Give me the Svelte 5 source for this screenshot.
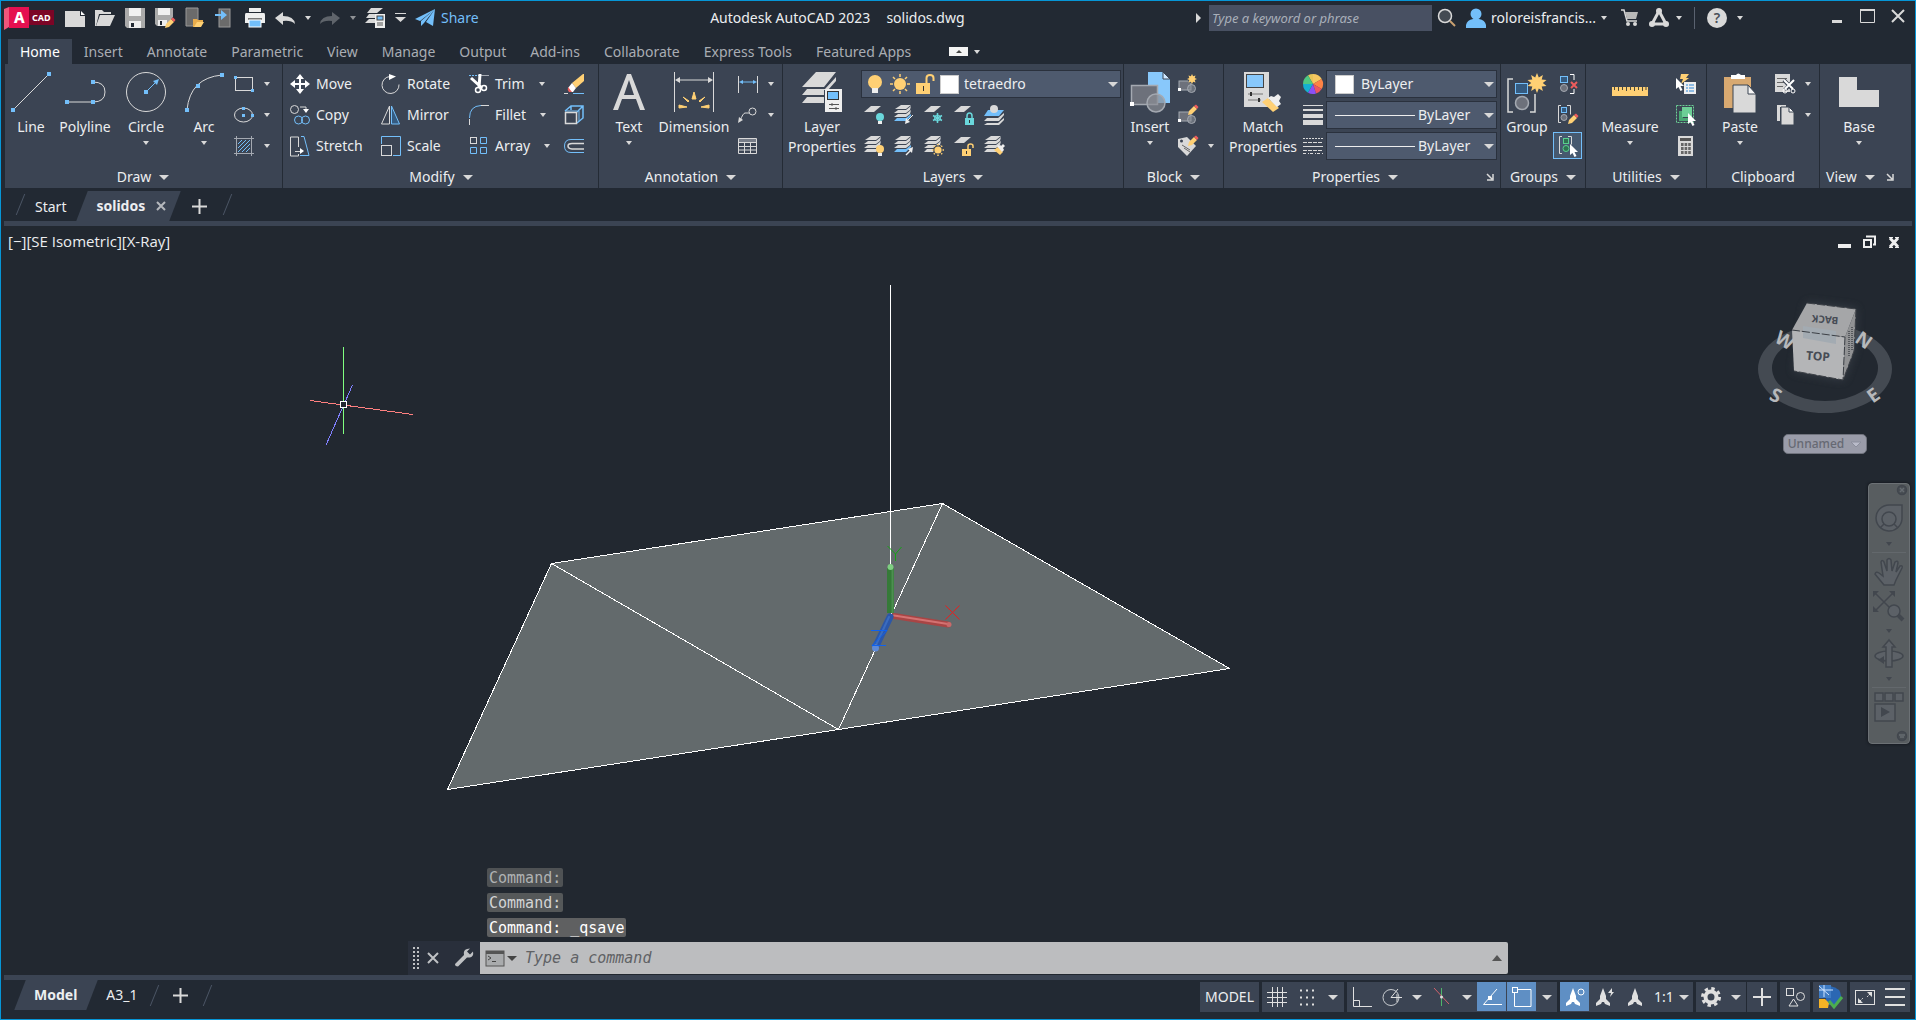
<script>
  const L = '#d9d9d9';
  const B = '#73bffa';
  const Y = '#ffd074';
  const G = '#a4a9b1';
  const D = '#3b4453';

  const dot = (x, y, s = 3) => `<rect x="${x}" y="${y}" width="${s}" height="${s}" fill="${B}"/>`;
  const sheet = (x, y, c = L) => `<path d="M${x + 7} ${y}h10l-7 6H${x}z" fill="${c}"/>`;
  const sheets = (second = L, third = L) =>
    `<path d="M7 0h10l-5 4H1zM4 5h8l5-4-1 4-4 3H0z" fill="${L}"/><path d="M4 9h8l5-4-1 4-4 3H0z" fill="${second}"/><path d="M3 13h9l5-4v2l-5 5H0z" fill="${third}"/>`;
  const bulb = (x, y, c) =>
    `<circle cx="${x}" cy="${y}" r="4" fill="${c}"/><rect x="${x - 2}" y="${y + 4}" width="4" height="3" fill="#eee"/>`;
  const rays = (x, y, r, c = Y) => {
    let d = '';
    for (let i = 0; i < 8; i++) {
      const a = (i * Math.PI) / 4;
      const [s, k] = [Math.sin(a), Math.cos(a)];
      d += `M${(x + r * 0.75 * s).toFixed(1)} ${(y - r * 0.75 * k).toFixed(1)}L${(x + r * s).toFixed(1)} ${(y - r * k).toFixed(1)}`;
    }
    return `<circle cx="${x}" cy="${y}" r="${r * 0.6}" fill="${c}"/><path d="${d}" stroke="${c}" stroke-width="1.500"/>`;
  };
  const star = (x, y, r, n = 10) => {
    let pts = '';
    for (let i = 0; i < n * 2; i++) {
      const rad = i % 2 ? r * 0.58 : r;
      const a = (i * Math.PI) / n;
      pts += `${(x + rad * Math.sin(a)).toFixed(1)},${(y - rad * Math.cos(a)).toFixed(1)} `;
    }
    return `<polygon points="${pts}" fill="${Y}"/>`;
  };
  const pencil = (x, y) =>
    `<path d="M${x} ${y + 10}l1-4 5-5 3 3-5 5z" fill="${Y}"/><path d="M${x + 6} ${y + 1}l2-1.5 2.500 2.500-1.500 2z" fill="#ee5c5c"/>`;
  const pointer = (x, y) => `<path d="M${x} ${y}v11l2.500-2 2 4 2-1-2-4h3.500z" fill="#fff"/>`;
  const padlock = (x, y, c, open) =>
    `<rect x="${x}" y="${y + 5}" width="9" height="7" fill="${c}"/><path d="M${open ? `${x + 6} ${y + 5}v-3q0-2 2.500-2t2.500 2v2` : `${x + 2} ${y + 5}v-2q0-3 2.500-3t2.500 3v2`}" fill="none" stroke="${c}" stroke-width="1.500"/><rect x="${x + 4}" y="${y + 7}" width="1" height="3" fill="#333"/>`;
  const brush = (x, y) =>
    `<path d="M${x + 1} ${y + 5}l4-3 5 5-3 3z" fill="${Y}"/><path d="M${x + 4} ${y + 1}l2-1 2 1 2-2 2 2-2 2 1 2-2 2z" fill="#eee"/>`;
  const blockShape = `<rect x="1" y="7" width="12" height="9" fill="#6d717b" stroke="${G}"/><circle cx="13.500" cy="14.500" r="4" fill="#8b8f96" fill-opacity=".6" stroke="${G}"/><rect x="0" y="14" width="3" height="3" fill="#fff"/>`;
  const compass = `<path d="M10 1l3 8v3l4 4v3l-5-2-1-2h-2l-1 2-5 2v-3l4-4v-3z" fill="currentColor"/>`;

  const icons = {
    newFile: `<path d="M0 3h15v5h5v11H0z" fill="${L}"/><path d="M16 3l4 4h-4z" fill="#fff"/>`,
    open: `<path d="M0 2h7l2 2h7v2H4L1 18H0z" fill="${L}"/><path d="M5 7h15l-5 11H1z" fill="${L}"/>`,
    save: `<path d="M0 0h20v20H2l-2-2z" fill="#aaa"/><rect x="4" width="12" height="8" fill="#f0f0f0"/><rect x="4" y="13" width="12" height="7" fill="#eee"/><rect x="6" y="15" width="3" height="4" fill="#222933"/>`,
    saveAs: `<path d="M0 0h18v9l-7 9H2l-2-2z" fill="#aaa"/><rect x="3" width="12" height="7" fill="#f0f0f0"/><rect x="3" y="12" width="9" height="6" fill="#eee"/><rect x="5" y="13" width="2" height="4" fill="#222933"/>${pencil(10, 10)}`,
    mobileOpen: `<path d="M1 0h12v18H1z" fill="#6b6b6b" stroke="#999"/><path d="M8 19v-8h4l1 1h5v2h-5l-3 5z" fill="#e8ac4c"/><path d="M12 14h7l-3 5H9z" fill="${Y}"/>`,
    mobileSave: `<rect x="4" y="1" width="11" height="18" fill="#6b6b6b" stroke="#999"/><path d="M0 6h6V2l6 5-6 5V8H0z" fill="${B}"/>`,
    print: `<path d="M4 0h12v4H4zM1 5h18q1 0 1 2v8H0V7q0-2 1-2z" fill="#eee"/><rect x="3" y="10" width="14" height="2" fill="#777"/><rect x="4" y="12" width="12" height="7" fill="${B}" stroke="#fff"/>`,
    undo: `<path d="M0 10l8-6v4q11 0 12 8-4-4-12-3v4z" fill="${L}"/>`,
    redo: `<path d="M20 10l-8-6v4Q1 8 0 16q4-4 12-3v4z" fill="#5f646b"/>`,
    sheetset: `<path d="M6 0h12l-6 5H2zM4 6h8v4H1zM4 11h6v4H0z" fill="${L}"/><rect x="10" y="6" width="10" height="14" fill="#eee"/><rect x="12" y="8" width="6" height="4" fill="${B}" stroke="#444"/><path d="M12 15h6M12 17h6" stroke="#555"/>`,
    custom: `<path d="M0 5h11v1H0zM0 9h11l-5.500 5z" fill="${L}"/>`,
    send: `<path d="M20 1L0 11l5 2zM20 1L6 13v5l3-3zM20 1l-9 13 7 4z" fill="${B}"/>`,
    search: `<circle cx="8" cy="8" r="6.500" fill="#444a52" stroke="${L}" stroke-width="1.500"/><path d="M13 13l5 5" stroke="#c9a071" stroke-width="2"/>`,
    user: `<circle cx="10" cy="6" r="5.500" fill="${B}"/><path d="M0 20v-3q1-5 7-6h6q6 1 7 6v3z" fill="${B}"/>`,
    cart: `<path d="M0 2h3l3 11h10" fill="none" stroke="${L}" stroke-width="1.500"/><path d="M4 4h13l-2 7H6z" fill="#b8b8b8"/><circle cx="7" cy="16" r="2" fill="${L}"/><circle cx="14" cy="16" r="2" fill="${L}"/>`,
    apps: `<path d="M10 3L3 16h14z" fill="none" stroke="${L}" stroke-width="3"/><circle cx="10" cy="3" r="3" fill="${L}"/><circle cx="3" cy="16" r="3" fill="${L}"/><circle cx="17" cy="16" r="3" fill="${L}"/>`,
    minimize: `<path d="M4 13h10v3H4z" fill="${L}"/>`,
    maximize: `<path d="M1.500 3.500h14v12h-14z" fill="none" stroke="${L}"/><path d="M1 3h15" stroke="${L}" stroke-width="2"/>`,
    close: `<path d="M2 3l12 12M14 3L2 15" stroke="${L}" stroke-width="2"/>`,

    line: `<path d="M2 38L38 2" stroke="${L}"/>${dot(0, 36, 4)}${dot(36, 0, 4)}`,
    polyline: `<path d="M2 30h26M28 10q12 0 12 10t-12 10" fill="none" stroke="${L}"/>${dot(0, 28, 4)}${dot(26, 28, 4)}${dot(26, 8, 4)}`,
    circle: `<circle cx="20" cy="20" r="19.500" fill="none" stroke="${L}"/><path d="M20 20L31 9" stroke="${B}"/><path d="M33 7l-6 2 4 4z" fill="${B}"/>${dot(18, 18, 4)}`,
    arc: `<path d="M3 38Q6 6 38 3" fill="none" stroke="${L}"/>${dot(1, 36, 4)}${dot(12, 12, 4)}${dot(36, 1, 4)}`,
    rectangle: `<rect x="1.500" y="3.500" width="17" height="13" fill="none" stroke="${L}"/>${dot(0, 2)}${dot(17, 15)}`,
    ellipse: `<ellipse cx="9.500" cy="10" rx="9" ry="7" fill="none" stroke="${L}"/>${dot(8, 2)}${dot(8, 9)}${dot(17, 9)}`,
    hatch: `<path d="M2.500 0v20M17.500 0v20M0 2.500h20M0 17.500h20" stroke="${G}"/><path d="M4 8l4-4M4 12l8-8M4 16L16 4M8 16l8-8M12 16l4-4" stroke="${B}"/>`,
    move: `<path d="M10 0l4 5h-3v4h4V6l5 4-5 4v-3h-4v4h3l-4 5-4-5h3v-4H5v3l-5-4 5-4v3h4V5H6z" fill="#fff"/>`,
    copy: `<circle cx="4.500" cy="4.500" r="4" fill="none" stroke="${L}"/><path d="M10 2h6v3" fill="none" stroke="${L}"/><path d="M13 4h6l-3 4z" fill="#fff"/><circle cx="8.500" cy="15" r="4" fill="none" stroke="${B}"/><circle cx="15.500" cy="15" r="4" fill="none" stroke="${B}"/>`,
    stretch: `<path d="M8.500 11v-10h-8v19h8v-2M5 15.500h7" fill="none" stroke="${L}"/><path d="M10 12l4 3-4 3z" fill="#fff"/><path d="M11 .5h3l5 19h-9" fill="none" stroke="${B}"/>`,
    rotate: `<path d="M9 2.500a8.500 8.500 0 1 0 9 8" fill="none" stroke="${L}"/><path d="M8 0l7 2.500L8 6z" fill="#fff"/>`,
    mirror: `<path d="M8.500 1v18h-8z" fill="none" stroke="${L}"/><path d="M10.500 1v18h8z" fill="#355b80" stroke="${B}"/>`,
    scale: `<path d="M.5 8V.5h19v19H12" fill="none" stroke="${B}"/><rect x=".5" y="9.500" width="10" height="10" fill="none" stroke="${L}"/>`,
    trim: `<path d="M0 1.500h10" stroke="${B}" stroke-dasharray="2 1"/><path d="M12 1.500h8" stroke="${G}"/><path d="M2 4l11 10M11 0l-1 14" stroke="#fff" stroke-width="3"/><circle cx="9" cy="16" r="2.500" fill="none" stroke="#fff" stroke-width="1.500"/><circle cx="15" cy="14" r="2.500" fill="none" stroke="#fff" stroke-width="1.500"/>`,
    fillet: `<path d="M.5 20v-6M12 .5h8" stroke="${L}"/><path d="M.5 13Q.5 1 12 .5" fill="none" stroke="${B}"/>`,
    array: `<rect x="1.500" y="1.500" width="6" height="6" fill="none" stroke="${L}"/><path d="M11.500 1.500h6v6h-6zM1.500 11.500h6v6h-6zM11.500 11.500h6v6h-6z" fill="none" stroke="${B}"/>`,
    erase: `<path d="M8 9l11-9h1v7l-8 7z" fill="${Y}"/><path d="M4 14l4-5 4 5-3 4H6z" fill="#fff"/><path d="M4 13l4 5H5q-2-2-1-5z" fill="#ee5c5c"/><path d="M0 19.500h4" stroke="${L}"/><path d="M9 19.500h11" stroke="${B}"/>`,
    explode: `<path d="M1 6l6-5h12v12l-6 5M7 1v4M13 7l6-6" fill="none" stroke="${B}" stroke-width="1.500"/><path d="M1 6h12M15 6v10" stroke="${B}"/><rect x="1.500" y="7.500" width="11" height="11" fill="none" stroke="${L}" stroke-width="1.500"/>`,
    offset: `<path d="M20 3.500H7Q.5 3.500.5 10T7 16.500h13" fill="none" stroke="${B}"/><path d="M20 7.500H8q-4 0-4 2.500t4 3h12" fill="none" stroke="${L}" stroke-width="1.500"/>`,

    text: `<path d="M4 38L18 2h4l14 36h-5l-4-11H13L9 38zM15 23h10L20 8z" fill="${L}" fill-rule="evenodd"/>`,
    dimension: `<path d="M.5 0v40M39.500 0v40M3 8h34" stroke="${L}"/><path d="M1 8l5-3v6zM39 8l-5-3v6z" fill="${L}"/><path d="M18 27l2-7 2 7zM9 25l6 4-1 1zM31 25l-6 4 1 1zM5 33l8 2-8 1zM35 33l-8 2 8 1z" fill="${Y}" stroke="${Y}"/>`,
    linear: `<path d="M.5 2v17M19.500 2v17" stroke="${L}"/><path d="M3 8h14" stroke="${B}"/><path d="M1 8l4-2v4zM19 8l-4-2v4z" fill="${B}"/>`,
    leader: `<path d="M2 16q3-8 5-8h4" fill="none" stroke="${L}"/><circle cx="14.500" cy="6.500" r="3.500" fill="none" stroke="${L}"/><path d="M0 18l1-6 4 3z" fill="${L}"/>`,
    table: `<path d="M.5 2.500h18v15H.5zM.5 6.500h18M.5 10.500h18M.5 14h18M6.500 6v11M12.500 6v11" fill="none" stroke="${L}"/><path d="M1 4.500h17" stroke="#777d88" stroke-width="3"/>`,

    layerProps: `<path d="M14 0h20L22 15H0zM5 17h18L34 5v4l-8 9h-4v5H0zM5 25l-5 6h22v-6z" fill="${L}"/><rect x="23" y="17" width="17" height="23" fill="#eee"/><rect x="25.500" y="19.500" width="11" height="8" fill="${B}" stroke="#333"/><path d="M27 32.500h10M27 36.500h10M30 31v3M34 35v3" stroke="#555"/>`,
    bulbOn: `<circle cx="10" cy="8" r="7" fill="${Y}"/><path d="M6 12h8v2l-2 1H8l-2-1z" fill="${Y}"/><rect x="7" y="14" width="6" height="5" fill="#eee"/>`,
    sunOn: `<circle cx="10" cy="10" r="6" fill="${Y}"/><path d="M10 0v3M10 17v3M0 10h3M17 10h3M3 3l2 2M15 15l2 2M17 3l-2 2M3 17l2-2" stroke="${Y}" stroke-width="1.500"/>`,
    unlocked: `<path d="M1 9h14v11H1z" fill="${Y}"/><path d="M11.500 9V4q0-3 3.500-3t3.500 3v3" fill="none" stroke="${Y}" stroke-width="2"/><path d="M8 12h1v5H8z" fill="#333"/>`,
    layOff: sheet(0, 1) + bulb(16, 12, '#6ad7dc'),
    layIsolate: sheets(L, B) + `<path d="M19 10l-6 6" stroke="#eee"/><path d="M11 19l1-6 4 4z" fill="#eee"/>`,
    layFreeze: sheet(0, 1) + `<path d="M13.500 8v10M9 10.500l9 5M18 10.500l-9 5" stroke="#6ad7dc" stroke-width="1.500"/><circle cx="13.500" cy="13" r="3" fill="none" stroke="#6ad7dc"/>`,
    layLock: sheet(0, 1) + padlock(11, 8, '#6ad7dc', false),
    layCurrent: `<path d="M4 5h16l-5 6H0z" fill="${B}"/><path d="M3 13h11l6-5v2l-5 6H0zM3 18h11l6-5v2l-5 5H0z" fill="${L}"/><circle cx="10" cy="4" r="4" fill="${L}"/>`,
    layOn: sheets() + bulb(16, 13, Y),
    layUniso: sheets(L, B) + `<path d="M12 19l5-5" stroke="#eee" stroke-width="1.500"/><path d="M19 11l-1 6-4-4z" fill="#eee"/>`,
    layThaw: sheets() + `<circle cx="14" cy="14" r="5" fill="${D}"/>` + rays(14, 14, 6),
    layUnlock: sheet(0, 1) + padlock(8, 8, Y, true),
    layMatch: sheets() + brush(9, 9),

    insert: `<path d="M18 0h15l7 7v24H18z" fill="#88c8fb"/><path d="M33 0v7h7z" fill="#cfe8ff" stroke="${D}"/><rect x="1.500" y="13.500" width="26" height="19" fill="#6d717b" stroke="${G}" stroke-width="1.500"/><circle cx="26" cy="31" r="9" fill="#8b8f96" fill-opacity=".7" stroke="${G}" stroke-width="1.500"/><rect y="30" width="4" height="4" fill="#fff"/>`,
    blockNew: blockShape + `<circle cx="14" cy="5" r="4" fill="${D}"/>` + star(14, 5, 5, 8),
    blockEdit: blockShape + pencil(10, 0),
    blockAttr: `<path d="M0 3l9-2 9 9-9 10L0 11z" fill="${L}"/><circle cx="3.500" cy="5" r="1.500" fill="${D}"/><path d="M4 9l8 5M6 12l6 4" stroke="#666"/>${pencil(10, 0)}`,

    match: `<rect x="1" y="0" width="25" height="35" fill="${L}"/><rect x="3.500" y="2.500" width="17" height="13" fill="#88c8fb" stroke="#444"/><path d="M5 22h15M5 28h13" stroke="#777"/><path d="M8 20v4M16 26v4" stroke="#333" stroke-width="2"/><path d="M19 30l6-4 11 10-6 4z" fill="${Y}"/><path d="M25 26l3-2 3 1 4-3 3 3-2 4 2 3-4 3z" fill="#eee"/>`,
    wheel: `<path d="M10 10V0a10 10 0 0 1 8.700 5z" fill="#f7c860"/><path d="M10 10L5 1.300A10 10 0 0 1 10 0z" fill="#e8c558"/><path d="M10 10L18.700 5a10 10 0 0 1 0 10z" fill="#ff8345"/><path d="M10 10l8.700 5A10 10 0 0 1 13 19.500z" fill="#ee5560"/><path d="M10 10l3 9.500a10 10 0 0 1-8-.8z" fill="#8b50f5"/><path d="M10 10l-5 8.700A10 10 0 0 1 0 10z" fill="#15b1d0"/><path d="M10 10H0A10 10 0 0 1 5 1.300z" fill="#4fc982"/>`,
    weights: `<path d="M0 .5h20" stroke="${L}"/><path d="M0 5h20" stroke="${L}" stroke-width="2"/><path d="M0 11h20" stroke="${L}" stroke-width="4"/><path d="M0 17.500h20" stroke="${L}" stroke-width="5"/>`,
    linetypes: `<path d="M0 2.500h20" stroke="${L}" stroke-dasharray="2 1"/><path d="M0 6.500h20M0 14.500h20" stroke="${L}" stroke-dasharray="4 1"/><path d="M0 10.500h20" stroke="${L}"/><path d="M0 17.500h20" stroke="${L}" stroke-dasharray="3 2 1 1"/>`,

    group: `<path d="M6 7H1v33h5M23 40h5V22" fill="none" stroke="${L}" stroke-width="1.500"/><rect x="8.500" y="11.500" width="12" height="10" fill="#355b80" stroke="${B}"/><circle cx="15" cy="31" r="6.500" fill="#6d717b" stroke="${G}" stroke-width="1.500"/>${star(30, 11, 10)}`,
    ungroup: `<path d="M12 .5h4V6M12 19.500h4V15" fill="none" stroke="#fff"/><rect x="2.500" y="2.500" width="7" height="6" fill="#355b80" stroke="${B}"/><circle cx="6" cy="14" r="3.500" fill="#6d717b" stroke="${G}"/><path d="M13 8l6 6M19 8l-6 6" stroke="#ee5c5c" stroke-width="2"/>`,
    groupEdit: `<path d="M3 .5H.5v17H3M9 .5h3.500v9" fill="none" stroke="${L}"/><rect x="3.500" y="2.500" width="5" height="5" fill="#355b80" stroke="${B}"/><circle cx="6" cy="12.500" r="3" fill="#6d717b" stroke="${G}"/>${pencil(10, 9)}`,
    groupSelect: `<path d="M4 .5H1.500v17H4M10 .5h3.500v8" fill="none" stroke="${L}"/><rect x="5.500" y="2.500" width="5" height="5" fill="#2e7352" stroke="#59cf8e"/><circle cx="8" cy="12.500" r="3" fill="#2e7352" stroke="#59cf8e"/>${pointer(12, 8)}`,

    measure: `<rect x="2" y="15" width="36" height="9" fill="${Y}"/><path d="M4.500 15v3M8.500 15v4M12.500 15v3M16.500 15v4M20.500 15v3M24.500 15v4M28.500 15v3M32.500 15v4M36 15v3" stroke="#4a4a3c"/>`,
    quickSelect: `<path d="M5 0h8l-3 4h3l-8 6 2-5H4z" fill="${Y}"/><rect x="8" y="8" width="12" height="12" fill="#eee"/><path d="M10 11h2M10 14h2M10 17h2M13 11h5M13 14h5M13 17h5" stroke="#2f88d8"/>${pointer(0, 4)}`,
    selectAll: `<rect x=".5" y=".5" width="17" height="17" fill="none" stroke="#6dcf96" stroke-dasharray="2 1"/><path d="M3 6h4v7h7v3H3z" fill="#4aa873"/><rect x="6" y="2" width="10" height="10" fill="#6dcf96"/>${pointer(12, 8)}`,
    calc: `<rect x="2" width="15" height="20" fill="${L}"/><rect x="4" y="2" width="11" height="3" fill="#555"/><path d="M5 8.500h10M5 12.500h10M5 16.500h10" stroke="#666" stroke-width="3" stroke-dasharray="2.600 1"/>`,

    paste: `<rect x="4" y="5" width="27" height="31" fill="#d8a971"/><path d="M11 3h5q2-3 5 0h4v4H11z" fill="#fff"/><path d="M13 13h15l8 8v20H13z" fill="${L}" stroke="${D}"/><path d="M28 13v9h8z" fill="#f5f5f5" stroke="${D}"/>`,
    cut: `<path d="M0 0h15v18H0z" fill="${L}"/><path d="M2 4.500h10M2 8.500h7M2 12.500h6" stroke="#666"/><path d="M9 6l9 10M19 6l-9 10" stroke="${D}" stroke-width="4"/><path d="M9 6l9 9M19 6l-9 9" stroke="#fff" stroke-width="2"/><circle cx="10" cy="17" r="2" fill="none" stroke="#fff"/><circle cx="18" cy="17" r="2" fill="none" stroke="#fff"/>`,
    copyClip: `<path d="M2 0h9v2H5v14H2z" fill="${L}"/><path d="M6 2h8l5 5v13H6z" fill="${L}" stroke="${D}"/><path d="M14 2v5h5z" fill="#fff" stroke="${D}"/>`,
    base: `<path d="M0 5h18v13h22v17H0z" fill="${L}"/>`,

    grid: `<path d="M5.500 0v20M10.500 0v20M15.500 0v20M0 5.500h20M0 10.500h20M0 15.500h20" stroke="#e0e0e0"/>`,
    snap: `<path d="M3 3.500h16M3 10.500h16M3 17.500h16" stroke="#e0e0e0" stroke-width="2" stroke-dasharray="2 4"/>`,
    ortho: `<path d="M1.500 0v19.500H20M1.500 13.500h6v6" fill="none" stroke="#e0e0e0"/>`,
    polar: `<circle cx="9" cy="10.500" r="8" fill="none" stroke="#c8ccd0"/><path d="M20 10.500H9L16 2M15 7v8" fill="none" stroke="#e0e0e0"/>`,
    isodraft: `<path d="M9.500 1v18" stroke="#4fb46a"/><path d="M2 1l15 16" stroke="#d2616b"/><circle cx="9.500" cy="10" r="1.500" fill="#ddd"/>`,
    otrack: `<path d="M15 2L1.500 17.500H20" fill="none" stroke="#fff"/><rect x="6" y="9" width="4" height="4" fill="#fff"/>`,
    osnap: `<path d="M6 2.500h13v17H2.500V6" fill="none" stroke="#fff"/><rect x=".5" y=".5" width="5" height="5" fill="none" stroke="#fff"/>`,
    annoVis: `<g transform="translate(-2 0)">${compass}</g><circle cx="16" cy="5" r="3" fill="none" stroke="#fff"/>`,
    annoAuto: `<g transform="translate(-2 0)">${compass}</g><path d="M17 1l-4 5h3l-1 4 4-5h-2z" fill="currentColor"/>`,
    anno: compass,
    gear: `<circle cx="10" cy="10" r="5.500" fill="none" stroke="#e0e0e0" stroke-width="4"/><circle cx="10" cy="10" r="8.500" fill="none" stroke="#e0e0e0" stroke-width="3" stroke-dasharray="3.400 3.280"/>`,
    plus: `<path d="M10 1v18M1 10h18" stroke="#e0e0e0" stroke-width="2"/>`,
    isolate: `<rect x="1.500" y="1.500" width="7" height="7" fill="none" stroke="#e0e0e0"/><circle cx="15.500" cy="9.500" r="4" fill="none" stroke="#e0e0e0"/><path d="M8.500 12l4.500 7H4z" fill="none" stroke="#e0e0e0"/>`,
    perf: `<path d="M12 1q11 2 11 10t-9 9H8v-7z" fill="#2b67b3"/><path d="M1 0h12v13H1z" fill="#3f7cc4"/><path d="M1 5h14M6 0v12M1 1l10 9" stroke="#cfe4ff"/><path d="M1 14h6l4 4-1 5H1z" fill="#f5b325"/><path d="M11 16l5 6 8-10" fill="none" stroke="#4cae50" stroke-width="3"/>`,
    clean: `<rect x=".5" y="3.500" width="19" height="14" fill="none" stroke="#e0e0e0"/><path d="M12 5h5v5zM3 11v5h5z" fill="#e0e0e0"/><path d="M15 7l-3 3M5 14l3-3" stroke="#e0e0e0" stroke-dasharray="2 1"/>`,
    menu: `<path d="M0 2h20M0 10h20M0 18h20" stroke="#e0e0e0" stroke-width="2"/>`,

    wrench: `<path d="M1 16L10 7q-1-5 3-6l3-.5-3 3 3 3 3-3q1 5-3 6h-3l-9 9q-3 0-3-2.500z" fill="#bfc1c4"/>`,
    terminal: `<rect x="1" y="3" width="18" height="15" fill="#a9abad" stroke="#555"/><rect x="1" y="3" width="18" height="3" fill="#555"/><path d="M3 8l3 2-3 2M7 13.500h4" fill="none" stroke="#444"/>`
  };

  const tabs = ['Home', 'Insert', 'Annotate', 'Parametric', 'View', 'Manage', 'Output', 'Add-ins', 'Collaborate', 'Express Tools', 'Featured Apps'];
  const layerTools = [
    ['layOff', 'layIsolate', 'layFreeze', 'layLock', 'layCurrent'],
    ['layOn', 'layUniso', 'layThaw', 'layUnlock', 'layMatch']
  ];
  const history = ['Command:', 'Command:', 'Command: _qsave'];

  let activeTab = $state('Home');
  let command = $state('');
  let keyword = $state('');
</script>

{#snippet icon(name, size = 20)}
  <svg class="icon" width={size} height={size} viewBox="0 0 {size} {size}" aria-hidden="true">{@html icons[name]}</svg>
{/snippet}

{#snippet caret(kind = '')}
  <span class="caret {kind}"></span>
{/snippet}

{#snippet big(name, lines, cls, hasCaret)}
  <button class="big {cls}">
    {@render icon(name, 40)}
    {#each lines as line}
      <span>{line}</span>
    {/each}
    {#if hasCaret}{@render caret()}{/if}
  </button>
{/snippet}

{#snippet tool(name, label, hasCaret)}
  <button class="tool" aria-label={label || name}>
    {@render icon(name)}
    {#if label}<span>{label}</span>{/if}
    {#if hasCaret}{@render caret(label ? 'far' : 'near')}{/if}
  </button>
{/snippet}

{#snippet heading(label, hasCaret, launcher)}
  <div class="heading">
    <button>{label}{#if hasCaret}{@render caret('wide')}{/if}</button>
    {#if launcher}
      <button class="launcher" aria-label="{label} settings">
        <svg width="8" height="8" viewBox="0 0 8 8"><path d="M1 1l5 5M7 1v6H1" fill="none" stroke="#d9d9d9" stroke-width="1.500" /></svg>
      </button>
    {/if}
  </div>
{/snippet}

{#snippet status(name, cls = '')}
  <button class="st {cls}" aria-label={name}>{@render icon(name)}</button>
{/snippet}

<div class="window">
  <header class="titlebar">
    <button class="logo" aria-label="Application menu">
      <svg width="50" height="23" viewBox="0 0 50 23">
        <path d="M24 3h26v15H24z" fill="#7c0526" />
        <path d="M0 2l5-2v20l-5 3z" fill="#f0567b" />
        <path d="M5 0h20v21H5z" fill="#e51050" />
        <text x="10" y="16" fill="#fff" font-size="15" font-weight="800">A</text>
        <text x="28" y="14" fill="#fff" font-size="9" font-weight="700">CAD</text>
      </svg>
    </button>
    <div class="qat">
      {#each ['newFile', 'open', 'save', 'saveAs', 'mobileOpen', 'mobileSave', 'print', 'undo'] as name}
        <button aria-label={name}>{@render icon(name)}</button>
      {/each}
      <button class="drop" aria-label="Undo list">{@render caret()}</button>
      <button aria-label="redo">{@render icon('redo')}</button>
      <button class="drop dim" aria-label="Redo list">{@render caret()}</button>
      <button aria-label="sheet set">{@render icon('sheetset')}</button>
      <button class="custom" aria-label="Customize">{@render icon('custom')}</button>
      <button class="share">{@render icon('send')}<span>Share</span></button>
    </div>
    <h1><span>Autodesk AutoCAD 2023</span><span>solidos.dwg</span></h1>
    <div class="account">
      <span class="play"></span>
      <input class="keyword" type="text" aria-label="Search help" placeholder="Type a keyword or phrase" bind:value={keyword} />
      <button class="find" aria-label="Search">{@render icon('search')}</button>
      <button class="user">{@render icon('user')}<span>roloreisfrancis...</span>{@render caret()}</button>
      <button class="cart" aria-label="Store">{@render icon('cart')}</button>
      <button class="apps" aria-label="Apps">{@render icon('apps')}{@render caret()}</button>
      <span class="rule"></span>
      <button class="help" aria-label="Help"><span class="q">?</span>{@render caret()}</button>
    </div>
    <div class="wincontrols">
      <button aria-label="Minimize">{@render icon('minimize', 16)}</button>
      <button aria-label="Maximize">{@render icon('maximize', 16)}</button>
      <button aria-label="Close">{@render icon('close', 16)}</button>
    </div>
  </header>

  <nav class="tabs">
    {#each tabs as tab}
      <button class:active={tab === activeTab} onclick={() => (activeTab = tab)}>{tab}</button>
    {/each}
    <button class="collapse" aria-label="Minimize ribbon"><span class="pill"></span>{@render caret()}</button>
  </nav>

  <section class="ribbon">
    <div class="panel draw">
      <div class="tools">
        {@render big('line', ['Line'], 'w42')}
        {@render big('polyline', ['Polyline'], 'w66')}
        {@render big('circle', ['Circle'], 'w56', true)}
        {@render big('arc', ['Arc'], 'w60', true)}
        <div class="col">
          {@render tool('rectangle', '', true)}
          {@render tool('ellipse', '', true)}
          {@render tool('hatch', '', true)}
        </div>
      </div>
      {@render heading('Draw', true)}
    </div>

    <div class="panel modify">
      <div class="tools">
        <div class="col first">
          {@render tool('move', 'Move')}
          {@render tool('copy', 'Copy')}
          {@render tool('stretch', 'Stretch')}
        </div>
        <div class="col second">
          {@render tool('rotate', 'Rotate')}
          {@render tool('mirror', 'Mirror')}
          {@render tool('scale', 'Scale')}
        </div>
        <div class="col third">
          {@render tool('trim', 'Trim', true)}
          {@render tool('fillet', 'Fillet', true)}
          {@render tool('array', 'Array', true)}
        </div>
        <div class="col">
          {@render tool('erase')}
          {@render tool('explode')}
          {@render tool('offset')}
        </div>
      </div>
      {@render heading('Modify', true)}
    </div>

    <div class="panel annotation">
      <div class="tools">
        {@render big('text', ['Text'], 'w60', true)}
        {@render big('dimension', ['Dimension'], 'w70')}
        <div class="col">
          {@render tool('linear', '', true)}
          {@render tool('leader', '', true)}
          {@render tool('table')}
        </div>
      </div>
      {@render heading('Annotation', true)}
    </div>

    <div class="panel layers">
      <div class="tools">
        {@render big('layerProps', ['Layer', 'Properties'], 'w78')}
        <div class="col">
          <div class="combo layer">
            {@render icon('bulbOn')}
            {@render icon('sunOn')}
            {@render icon('unlocked')}
            <span class="swatch"></span>
            <select aria-label="Layer"><option>tetraedro</option></select>
            {@render caret('wide')}
          </div>
          {#each layerTools as row}
            <div class="row">
              {#each row as name}{@render tool(name)}{/each}
            </div>
          {/each}
        </div>
      </div>
      {@render heading('Layers', true)}
    </div>

    <div class="panel block">
      <div class="tools">
        {@render big('insert', ['Insert'], 'w52', true)}
        <div class="col">
          {@render tool('blockNew')}
          {@render tool('blockEdit')}
          {@render tool('blockAttr', '', true)}
        </div>
      </div>
      {@render heading('Block', true)}
    </div>

    <div class="panel properties">
      <div class="tools">
        {@render big('match', ['Match', 'Properties'], 'w78')}
        <div class="col">
          {@render tool('wheel')}
          {@render tool('weights')}
          {@render tool('linetypes')}
        </div>
        <div class="col combos">
          <div class="combo">
            <span class="swatch"></span>
            <select aria-label="Object color"><option>ByLayer</option></select>
            {@render caret('wide')}
          </div>
          <div class="combo">
            <span class="stroke"></span>
            <select class="tight" aria-label="Lineweight"><option>ByLayer</option></select>
            {@render caret('wide')}
          </div>
          <div class="combo">
            <span class="stroke"></span>
            <select class="tight" aria-label="Linetype"><option>ByLayer</option></select>
            {@render caret('wide')}
          </div>
        </div>
      </div>
      {@render heading('Properties', true, true)}
    </div>

    <div class="panel groups">
      <div class="tools">
        {@render big('group', ['Group'], 'w52')}
        <div class="col">
          {@render tool('ungroup')}
          {@render tool('groupEdit')}
          <button class="tool on" aria-label="Group selection">{@render icon('groupSelect')}</button>
        </div>
      </div>
      {@render heading('Groups', true)}
    </div>

    <div class="panel utilities">
      <div class="tools">
        {@render big('measure', ['Measure'], 'w88', true)}
        <div class="col">
          {@render tool('quickSelect')}
          {@render tool('selectAll')}
          {@render tool('calc')}
        </div>
      </div>
      {@render heading('Utilities', true)}
    </div>

    <div class="panel clipboard">
      <div class="tools">
        {@render big('paste', ['Paste'], 'w66', true)}
        <div class="col">
          {@render tool('cut', '', true)}
          {@render tool('copyClip', '', true)}
        </div>
      </div>
      {@render heading('Clipboard')}
    </div>

    <div class="panel view">
      <div class="tools">
        {@render big('base', ['Base'], 'w78', true)}
      </div>
      {@render heading('View', true, true)}
    </div>
  </section>

  <nav class="filetabs">
    <span class="slash"></span>
    <button class="start">Start</button>
    <div class="filetab">
      <button>solidos</button>
      <button class="x" aria-label="Close solidos">
        <svg width="10" height="10" viewBox="0 0 10 10"><path d="M1 1l8 8M9 1L1 9" stroke="#b5b8bd" stroke-width="2" /></svg>
      </button>
    </div>
    <button class="add" aria-label="New drawing">
      <svg width="15" height="15" viewBox="0 0 15 15"><path d="M7.500 0v15M0 7.500h15" stroke="#d9d9d9" stroke-width="2" /></svg>
    </button>
    <span class="slash"></span>
  </nav>

  <main class="viewport">
    <svg class="scene" viewBox="1 226 1914 749" aria-label="Drawing">
      <polygon points="551.5,563.5 942.5,503.5 1229.5,668.5 838.5,729.5 447.5,789.5" fill="#636a6c" />
      <g fill="none" stroke="#fff" shape-rendering="crispEdges">
        <path d="M551.5 563.5L942.5 503.5L1229.5 668.5L838.5 729.5L447.5 789.500z" />
        <path d="M551.5 563.5L838.5 729.5L942.5 503.5M890.5 285v280" />
      </g>
      <g stroke-linecap="round">
        <path d="M894 616l54 8.500" stroke="#a84545" stroke-width="6" />
        <path d="M894 615.500l54 8.500" stroke="#d47272" stroke-width="2" />
        <path d="M890.500 568v45" stroke="#357a38" stroke-width="7" stroke-linecap="butt" />
        <path d="M892.500 568v45" stroke="#4d8f50" stroke-width="2" stroke-linecap="butt" />
        <circle cx="890.500" cy="567" r="3" fill="#7fce82" />
        <path d="M890 617l-14 29" stroke="#2c57a8" stroke-width="7" />
        <path d="M889 617l-13 28" stroke="#3a6cc0" stroke-width="2" />
        <circle cx="875.500" cy="648" r="3.500" fill="#5f8bd8" />
        <circle cx="949" cy="624.500" r="2.500" fill="#c96a6a" />
      </g>
      <g fill="none" stroke-width="1">
        <path d="M887.500 546l8 8 6-7M895.500 554v7" stroke="#15a315" />
        <path d="M945.500 605.500l14 14M959.500 605.500l-14 14" stroke="#e51f1f" />
        <path d="M871 630.500h16l-15 15h14" stroke="#0d62f2" />
      </g>
      <g shape-rendering="crispEdges">
        <path d="M343.500 347v87" stroke="#80ff80" />
        <path d="M310 400.500l103 14" stroke="#ff8080" />
        <path d="M352.500 385l-26.500 60" stroke="#8080ff" />
        <rect x="340.500" y="401.500" width="6" height="6" fill="#222830" stroke="#fff" />
      </g>
    </svg>

    <div class="viewlabel">
      <button>[−]</button><button>[SE Isometric]</button><button>[X-Ray]</button>
    </div>

    <div class="doccontrols">
      <button aria-label="Minimize drawing"><svg width="16" height="16" viewBox="0 0 16 16"><path d="M2 10h13v4H2z" fill="#eee" /></svg></button>
      <button aria-label="Restore drawing"><svg width="16" height="16" viewBox="0 0 16 16"><path d="M5 2.500h9v8h-2" fill="none" stroke="#eee" stroke-width="2" /><rect x="3" y="6" width="7" height="7" fill="none" stroke="#eee" stroke-width="2" /></svg></button>
      <button aria-label="Close drawing"><svg width="16" height="16" viewBox="0 0 16 16"><path d="M4 4l8 9M12 4l-8 9" stroke="#eee" stroke-width="3" /><path d="M3 3.500h4M9 3.500h4M3 13.500h4M9 13.500h4" stroke="#eee" stroke-width="1" /></svg></button>
    </div>

    <div class="viewcube">
      <svg width="144" height="124" viewBox="0 0 144 124" aria-label="View cube">
        <defs>
          <filter id="glow" x="-30%" y="-30%" width="160%" height="160%"><feGaussianBlur stdDeviation="5" /></filter>
        </defs>
        <path d="M55 8l49 6-2 42-11 29-49-9z" fill="#50565e" opacity=".5" filter="url(#glow)" />
        <path d="M6 74a67 44 0 1 0 134 0a67 44 0 1 0-134 0zM20 73a53 33 0 1 0 106 0a53 33 0 1 0-106 0z" fill="#444a52" fill-rule="evenodd" />
        <g class="compass" fill="#b6b8bb">
          <text transform="translate(33 45) rotate(30)">W</text>
          <text transform="translate(112 45) rotate(35)">N</text>
          <text transform="translate(24 100) rotate(25)">S</text>
          <text transform="translate(121 100) rotate(-35)">E</text>
        </g>
        <path d="M55 8l49 6-11 28-53-7z" fill="#a5a6a8" />
        <path d="M40 35l53 7-2 43-49-9z" fill="#b4b5b7" />
        <path d="M104 14l-2 42-11 29 2-43z" fill="#919294" />
        <path d="M51 31l33 5v13l-33-6z" fill="#a3abb2" />
        <path d="M55 8l49 6M40 35l53 7M104 14l-2 42-11 29M93 42l-2 43-49-9" fill="none" stroke="#3c4046" stroke-dasharray="8 2" />
        <path d="M97 36v26M100 32v24" stroke="#55585d" stroke-width="2" stroke-dasharray="1 1" />
        <g class="face" fill="#474c55">
          <text font-size="12" transform="translate(66 61) rotate(5)">TOP</text>
          <text font-size="10" transform="translate(73 25) rotate(185)">BACK</text>
        </g>
      </svg>
      <button class="ucs">Unnamed<svg width="12" height="7" viewBox="0 0 12 7"><path d="M1 1h10L6 6z" fill="#b9bbc9" stroke="#8b8e9c" /></svg></button>
    </div>

    <aside class="navbar">
      <button class="mini" aria-label="Close navigation bar"><svg width="10" height="10" viewBox="0 0 10 10"><circle cx="5" cy="5" r="4.500" fill="#484d53" /><path d="M3 3l4 4M7 3L3 7" stroke="#666c72" /></svg></button>
      <button aria-label="Steering wheel">
        <svg width="30" height="30" viewBox="0 0 30 30"><path d="M15 1h13v14a13 13 0 1 1-13-14z" /><circle cx="15" cy="15" r="7" /><path d="M10 20l-4 4M20 20l4 4" /></svg>
      </button>
      <span class="caret"></span>
      <hr />
      <button aria-label="Pan">
        <svg width="30" height="30" viewBox="0 0 30 30"><path d="M10 28L1 17q1-3 4-1l4 3L7 5q1-3 3 0l3 9V3q2-3 4 0l1 11 3-9q3-2 3 1l-2 9 4-6q3-1 2 2l-6 12-2 5z" /></svg>
      </button>
      <button class="zoom" aria-label="Zoom extents">
        <svg width="32" height="30" viewBox="0 0 32 30"><path d="M2 2l18 18M20 2L2 20" /><path class="solid" d="M0 0h6L0 6zM22 0h-6l6 6zM0 21h6l-6-6z" /><circle cx="21" cy="20" r="6" /><path d="M25 24l5 5" stroke-width="4" /></svg>
      </button>
      <span class="caret"></span>
      <button aria-label="Orbit">
        <svg width="30" height="30" viewBox="0 0 30 30"><ellipse cx="15" cy="17" rx="14" ry="5" /><path d="M12 28V8H9l6-7 6 7h-3v20z" /><path class="solid" d="M4 21l6-4v8z" /></svg>
      </button>
      <span class="caret"></span>
      <hr />
      <button aria-label="Show motion">
        <svg width="30" height="30" viewBox="0 0 30 30"><path d="M1 1h8v8H1zM11 1h8v8h-8zM21 1h8v8h-8zM1 12h20v17H1z" /><path class="solid" d="M7 15l9 5-9 5z" /></svg>
      </button>
      <button class="mini last" aria-label="Navigation bar options"><svg width="10" height="10" viewBox="0 0 10 10"><circle cx="5" cy="5" r="4.500" fill="#484d53" /><path d="M2 4h6M3 6h4" stroke="#666c72" /></svg></button>
    </aside>

    <div class="palette">
      <div class="history">
        {#each history as entry}
          <span>{entry}</span>
        {/each}
      </div>
      <div class="cmdline">
        <div class="grip">
          <svg width="6" height="22" viewBox="0 0 6 22"><path d="M1 0v22M5 0v22" stroke="#bfc1c4" stroke-width="2" stroke-dasharray="2 2" /></svg>
          <button aria-label="Close command line"><svg width="12" height="12" viewBox="0 0 12 12"><path d="M1 1l10 10M11 1L1 11" stroke="#bfc1c4" stroke-width="2" /></svg></button>
          <button class="wrench" aria-label="Customize">{@render icon('wrench')}</button>
        </div>
        <label for="command">{@render icon('terminal')}<span class="caret dark"></span></label>
        <input id="command" type="text" aria-label="Command" placeholder="Type a command" bind:value={command} />
        <button class="expand" aria-label="Command history"></button>
      </div>
    </div>
  </main>

  <footer>
    <nav class="layouts">
      <button class="model">Model</button>
      <button class="sheet">A3_1</button>
      <span class="slash"></span>
      <button class="add" aria-label="New layout">
        <svg width="15" height="15" viewBox="0 0 15 15"><path d="M7.500 0v15M0 7.500h15" stroke="#d9d9d9" stroke-width="2" /></svg>
      </button>
      <span class="slash"></span>
    </nav>
    <div class="statusbar">
      <div class="set"><button class="space">MODEL</button></div>
      <div class="set">
        {@render status('grid')}
        {@render status('snap')}
        <button class="more wider" aria-label="Snap options">{@render caret('wide')}</button>
      </div>
      <div class="set">
        {@render status('ortho')}
        {@render status('polar')}
        <button class="more" aria-label="Polar options">{@render caret('wide')}</button>
        {@render status('isodraft')}
        <button class="more" aria-label="Isodraft options">{@render caret('wide')}</button>
        {@render status('otrack', 'lit')}
        {@render status('osnap', 'lit')}
        <button class="more" aria-label="Object snap options">{@render caret('wide')}</button>
      </div>
      <div class="set">
        {@render status('annoVis', 'lit')}
        {@render status('annoAuto')}
        {@render status('anno')}
        <button class="ratio">1:1{@render caret('wide')}</button>
      </div>
      <div class="set">
        {@render status('gear')}
        <button class="more" aria-label="Workspaces">{@render caret('wide')}</button>
      </div>
      <div class="set flush">{@render status('plus')}</div>
      <div class="set">{@render status('isolate')}</div>
      <div class="set"><button class="st perf" aria-label="Graphics performance">{@render icon('perf', 24)}</button></div>
      <div class="set">
        {@render status('clean')}
        {@render status('menu')}
      </div>
    </div>
  </footer>
</div>

<style>
  :global(body) {
    background: #222830;
  }

  .window {
    display: flex;
    flex-direction: column;
    box-sizing: border-box;
    min-height: 100vh;
    border: 1px solid #0696d7;
    background: #222933;
    color: #eceef0;
    font: 14px/20px 'Noto Sans', 'Open Sans', sans-serif;
    overflow: hidden;
  }

  button,
  input,
  select {
    margin: 0;
    padding: 0;
    border: 0;
    background: none;
    color: inherit;
    font: inherit;
    white-space: nowrap;
  }

  svg {
    display: block;
    flex: none;
    overflow: visible;
  }

  .caret {
    flex: none;
    width: 0;
    height: 0;
    border: 3px solid transparent;
    border-top: 4px solid #d9d9d9;
    border-bottom: 0;
  }

  .caret.wide {
    border-width: 5px;
    border-top-width: 5px;
    border-bottom: 0;
  }

  .caret.near {
    margin-left: 4px;
  }

  .caret.far {
    margin-left: 8px;
  }

  /* title bar */
  .titlebar {
    display: flex;
    align-items: center;
    height: 34px;
    padding-left: 3px;
  }

  .logo {
    width: 61px;
  }

  .qat,
  .account,
  .wincontrols {
    display: flex;
    align-items: center;
  }

  .qat button {
    display: flex;
    align-items: center;
    width: 30px;
  }

  .qat .drop {
    width: 15px;
  }

  .qat .dim {
    opacity: 0.6;
  }

  .qat .custom {
    width: 20px;
  }

  .qat .share {
    gap: 6px;
    width: auto;
    color: #73bffa;
  }

  h1 {
    display: flex;
    flex: 1;
    justify-content: center;
    gap: 16px;
    margin: 0;
    font-size: 14px;
    font-weight: 400;
    white-space: nowrap;
  }

  .play {
    border: 5px solid transparent;
    border-left-color: #d9d9d9;
    border-right: 0;
    margin-right: 8px;
  }

  .keyword {
    width: 223px;
    height: 26px;
    box-sizing: border-box;
    padding: 0 3px;
    background: #485062;
    font-size: 13px;
    font-style: italic;
  }

  .keyword::placeholder {
    color: #a9afb9;
  }

  .account button {
    display: flex;
    align-items: center;
  }

  .find {
    margin: 0 9px 0 5px;
  }

  .user {
    gap: 5px;
  }

  .cart {
    margin: 0 8px 0 14px;
  }

  .apps {
    gap: 7px;
  }

  .rule {
    width: 1px;
    height: 22px;
    margin: 0 12px;
    background: #5a6270;
  }

  .help {
    gap: 10px;
  }

  .q {
    width: 20px;
    border-radius: 50%;
    background: #d9d9d9;
    color: #4a4f58;
    font-weight: 600;
    text-align: center;
  }

  .wincontrols {
    gap: 15px;
    align-self: flex-start;
    padding-top: 6px;
    margin: 0 9px 0 85px;
  }

  /* ribbon */
  .tabs {
    display: flex;
    height: 29px;
    padding: 0 7px;
    align-items: flex-end;
  }

  .tabs button {
    height: 25px;
    padding: 0 12px;
    color: #a9adb3;
  }

  .tabs .active {
    background: #3b4453;
    color: #fff;
  }

  .tabs .collapse {
    display: flex;
    align-items: center;
    gap: 6px;
    margin-left: 26px;
    padding: 0;
  }

  .pill {
    display: flex;
    justify-content: center;
    align-items: center;
    width: 19px;
    height: 9px;
    background: #f4f4f4;
  }

  .pill::before {
    content: '';
    border: 3px solid transparent;
    border-bottom-color: #444;
    border-top: 0;
  }

  .ribbon {
    display: flex;
    height: 124px;
    margin: 0 4px;
    background: #3b4453;
  }

  .panel {
    display: flex;
    flex: none;
    flex-direction: column;
    box-sizing: border-box;
    border-right: 1px solid #242b35;
  }

  .draw { width: 278px; padding-left: 5px; }
  .modify { width: 316px; padding-left: 7px; }
  .annotation { width: 184px; }
  .layers { width: 341px; }
  .block { width: 100px; }
  .properties { width: 277px; }
  .groups { width: 85px; }
  .utilities { width: 121px; }
  .clipboard { width: 113px; }
  .view { flex: 1; border-right: 0; }

  .tools {
    display: flex;
    height: 102px;
  }

  .big {
    display: flex;
    flex: none;
    flex-direction: column;
    align-items: center;
    padding-top: 8px;
  }

  .big .icon {
    margin-bottom: 5px;
  }

  .big .caret {
    margin-top: 4px;
  }

  .w42 { width: 42px; }
  .w52 { width: 52px; }
  .w56 { width: 56px; }
  .w60 { width: 60px; }
  .w66 { width: 66px; }
  .w70 { width: 70px; }
  .w78 { width: 78px; }
  .w88 { width: 88px; }

  .col {
    display: flex;
    flex-direction: column;
    padding-top: 4px;
  }

  .first { width: 91px; }
  .second { width: 88px; }
  .third { width: 95px; }
  .annotation .col { padding-left: 9px; }
  .utilities .col,
  .clipboard .col,
  .block .col { padding-left: 2px; }

  .tool {
    display: flex;
    align-items: center;
    gap: 6px;
    height: 31px;
  }

  .groups .tool {
    width: 29px;
    box-sizing: border-box;
    justify-content: center;
  }

  .groups .on {
    height: 27px;
    margin-top: 2px;
    border: 1px solid #73bffa;
    background: #46596f;
  }

  .row {
    display: flex;
    gap: 10px;
    padding-left: 3px;
  }

  .combo {
    display: flex;
    align-items: center;
    gap: 7px;
    box-sizing: border-box;
    width: 171px;
    height: 28px;
    margin: 2px 0 1px;
    padding: 0 2px 0 8px;
    border: 1px solid #2a313d;
    background: #4e5a6e;
  }

  .combo.layer {
    width: 260px;
    padding-left: 3px;
    gap: 5px;
  }

  .combo select {
    flex: 1;
    min-width: 0;
    appearance: none;
    outline: none;
  }

  .swatch {
    width: 17px;
    height: 17px;
    border: 1px solid #ccc;
    background: #fff;
  }

  .stroke {
    width: 80px;
    height: 1px;
    background: #eee;
  }

  .combo .tight {
    margin-left: -4px;
  }

  .combos {
    padding-left: 3px;
  }

  .properties .col:not(.combos) {
    padding-left: 1px;
  }

  .heading {
    display: flex;
    align-items: center;
    justify-content: center;
    height: 22px;
  }

  .heading button {
    display: flex;
    align-items: center;
    gap: 8px;
  }

  .draw .heading,
  .modify .heading {
    margin-left: -6px;
  }

  .properties .heading > :first-child {
    margin: 0 auto;
  }

  .heading .launcher {
    margin-right: 6px;
  }

  .view .heading {
    justify-content: flex-start;
    gap: 11px;
    padding-left: 6px;
  }

  /* drawing tabs */
  .filetabs {
    display: flex;
    align-items: center;
    height: 33px;
    margin: 0 3px;
    padding-left: 12px;
    border-bottom: 5px solid #3b4453;
  }

  .slash {
    width: 1px;
    height: 21px;
    margin: 0 4px;
    background: #4c5666;
    transform: skewX(-22deg);
  }

  .start {
    margin: 5px 10px 0;
  }

  .filetab {
    position: relative;
    display: flex;
    align-items: center;
    gap: 11px;
    height: 30px;
    margin-top: 3px;
    padding: 0 15px 0 20px;
    font-weight: 700;
    isolation: isolate;
  }

  .filetab::before,
  .model::before {
    content: '';
    position: absolute;
    inset: 0 6px 0 6px;
    z-index: -1;
    background: #3b4453;
    transform: skewX(-21deg);
  }

  .add {
    margin: 4px 16px 0 11px;
  }

  /* viewport */
  .viewport {
    position: relative;
    display: flex;
    flex: 1;
    flex-direction: column;
    justify-content: flex-end;
    min-height: 560px;
    background: #222830;
  }

  .scene {
    position: absolute;
    inset: 0;
    width: 100%;
    height: 100%;
  }

  .viewlabel {
    position: absolute;
    top: 5px;
    left: 7px;
    font-family: 'Open Sans', 'Noto Sans', sans-serif;
    font-size: 15px;
  }

  .doccontrols {
    position: absolute;
    top: 8px;
    right: 13px;
    display: flex;
    gap: 9px;
  }

  .viewcube {
    position: absolute;
    top: 69px;
    right: 19px;
    display: flex;
    flex-direction: column;
    align-items: center;
  }

  .compass,
  .face {
    font-weight: 700;
    text-anchor: middle;
    dominant-baseline: central;
  }

  .compass {
    font-size: 19px;
  }

  .ucs {
    display: flex;
    align-items: center;
    gap: 6px;
    height: 20px;
    margin: 15px 0 0 2px;
    padding: 0 4px;
    border: 1px solid #70737d;
    border-radius: 5px;
    box-sizing: border-box;
    background: #9a9ca9;
    color: #666973;
    font-size: 12px;
    font-weight: 500;
    line-height: 18px;
  }

  .navbar {
    position: absolute;
    top: 257px;
    right: 5px;
    display: flex;
    flex-direction: column;
    align-items: center;
    box-sizing: border-box;
    width: 42px;
    height: 261px;
    padding-top: 1px;
    border: 1px solid #6c7175;
    border-radius: 4px;
    background: #585d60;
    box-shadow: 0 0 3px #0d1014;
  }

  .navbar button {
    margin-top: 4px;
  }

  .navbar svg {
    fill: #5c6167;
    stroke: #42474e;
    stroke-width: 1.500;
  }

  .navbar .solid {
    fill: #42474e;
    stroke: none;
  }

  .navbar .mini {
    align-self: flex-end;
    margin: 0 2px 5px 0;
  }

  .navbar .last {
    margin: auto 2px 2px 0;
  }

  .navbar .caret {
    margin: 8px 0 2px;
    border-top-color: #42474e;
  }

  .navbar hr {
    width: 34px;
    margin: 4px 0 0;
    border: 0;
    border-top: 1px solid #63686c;
  }

  .palette {
    position: relative;
    width: min(1100px, 80%);
    margin: 0 auto;
    font-family: 'DejaVu Sans Mono', 'Liberation Mono', monospace;
    font-size: 15px;
  }

  .history {
    display: flex;
    flex-direction: column;
    align-items: flex-start;
    gap: 6px;
    margin: 0 0 5px 79px;
  }

  .history span {
    height: 19px;
    padding: 0 2px;
    border-radius: 2px;
    background: #5f6061;
    color: #fff;
    line-height: 20px;
    white-space: pre;
  }

  .history span:nth-child(1) {
    background: #4f5254;
    color: #b0b2b3;
  }

  .history span:nth-child(2) {
    background: #555859;
    color: #d3d4d5;
  }

  .cmdline {
    display: flex;
    align-items: center;
    height: 32px;
    margin-bottom: 1px;
    border-radius: 2px;
    background: #bcbdbf;
  }

  .grip {
    display: flex;
    align-items: center;
    box-sizing: border-box;
    width: 72px;
    height: 34px;
    padding-left: 5px;
    gap: 8px;
    background: #292f3b;
  }

  .grip .wrench {
    margin-left: 7px;
  }

  .cmdline label {
    display: flex;
    align-items: center;
    gap: 2px;
    padding: 0 8px 0 5px;
  }

  .caret.dark {
    border-width: 5px;
    border-top-color: #444;
    border-bottom: 0;
  }

  .cmdline input {
    flex: 1;
    min-width: 0;
    height: 32px;
    outline: none;
    color: #222;
    font-style: italic;
  }

  .cmdline input::placeholder {
    color: #606265;
  }

  .expand {
    width: 10px;
    height: 6px;
    margin-right: 6px;
    background: #555;
    clip-path: polygon(50% 0, 100% 100%, 0 100%);
  }

  /* footer */
  footer {
    display: flex;
    justify-content: space-between;
    height: 39px;
    margin: 0 3px;
    border-top: 5px solid #3b4453;
  }

  .layouts {
    display: flex;
    align-items: center;
    height: 30px;
    padding-left: 10px;
  }

  .model {
    position: relative;
    height: 30px;
    padding: 0 21px 0 20px;
    font-weight: 700;
    isolation: isolate;
  }

  .sheet {
    margin: 0 12px 0 8px;
  }

  .layouts .add {
    margin: 0 15px 0 14px;
  }

  .statusbar {
    display: flex;
    gap: 3px;
    padding: 2px 2px 0 0;
  }

  .set {
    display: flex;
    height: 30px;
    background: #3b4453;
  }

  .set.flush {
    margin-left: -2px;
  }

  .st {
    display: flex;
    align-items: center;
    justify-content: center;
    width: 30px;
    color: #e0e0e0;
  }

  .st.lit {
    width: 30px;
    height: 29px;
    box-sizing: border-box;
    border-right: 1px solid #3b4453;
    background: #5f8fc4;
    color: #fff;
  }

  .st.perf {
    width: 34px;
  }

  .space {
    width: 59px;
  }

  .more {
    display: flex;
    align-items: center;
    justify-content: center;
    width: 20px;
  }

  .more.wider {
    width: 22px;
  }

  .ratio {
    display: flex;
    align-items: center;
    justify-content: center;
    gap: 5px;
    width: 43px;
  }
</style>
